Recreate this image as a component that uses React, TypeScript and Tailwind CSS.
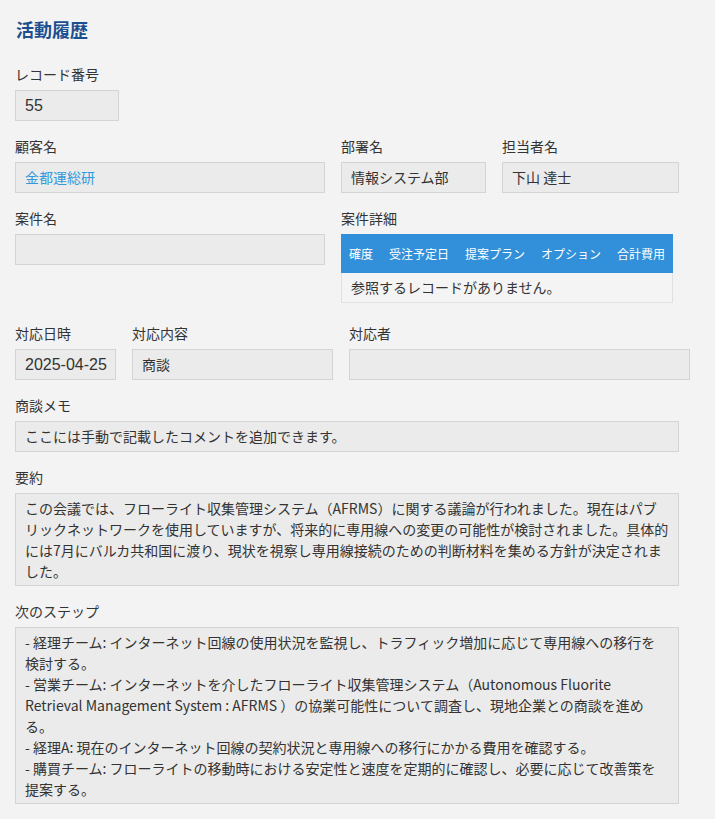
const font = "font-['Noto_Sans_CJK_JP','Noto_Sans',sans-serif]";

function Field({
  label,
  value,
  width,
  link,
  num,
}: {
  label: string;
  value?: string;
  width: string;
  link?: boolean;
  num?: boolean;
}) {
  return (
    <div className={`flex flex-col ${width}`}>
      <div className="text-[14px] leading-[20px] text-[#333] h-[20px] mb-[6px]">{label}</div>
      <div
        className={`h-[31px] border border-[#d4d4d4] bg-[#ebebeb] pl-[9px] pr-[4px] flex items-center whitespace-nowrap ${
          num ? "text-[16px] font-['Liberation_Sans',sans-serif]" : "text-[14px]"
        } ${link ? "text-[#3498db]" : "text-[#333]"}`}
      >
        {value}
      </div>
    </div>
  );
}

function TextBlock({ label, children }: { label: string; children: React.ReactNode }) {
  return (
    <div className="flex flex-col w-[664px]">
      <div className="text-[14px] leading-[20px] text-[#333] h-[20px] mb-[6px]">{label}</div>
      <div className="border border-[#d4d4d4] bg-[#ebebeb] px-[9px] py-[3.5px] text-[14px] leading-[21px] text-[#333]">
        {children}
      </div>
    </div>
  );
}

export default function App() {
  const heads = ["確度", "受注予定日", "提案プラン", "オプション", "合計費用"];
  return (
    <div className={`min-h-[819px] bg-[#f3f3f3] pl-[15px] pt-[17px] pb-[14px] ${font}`}>
      <h1 className="text-[18px] leading-[24px] font-bold text-[#1b4f8f] pl-[1px] mb-[23px]">活動履歴</h1>

      <div className="flex flex-col gap-[15px]">
        <Field label="レコード番号" value="55" width="w-[104px]" num />

        <div className="flex gap-[16px]">
          <Field label="顧客名" value="金都運総研" width="w-[310px]" link />
          <Field label="部署名" value="情報システム部" width="w-[145px]" />
          <Field label="担当者名" value="下山 達士" width="w-[177px]" />
        </div>

        <div className="flex gap-[16px] pb-[5px]">
          <Field label="案件名" width="w-[310px]" />
          <div className="flex flex-col">
            <div className="text-[14px] leading-[20px] text-[#333] h-[20px] mb-[6px]">案件詳細</div>
            <div className="w-[332px]">
              <div className="h-[39px] bg-[#3190d9] flex items-center text-white text-[12px]">
                {heads.map((h) => (
                  <span key={h} className="px-[8px]">{h}</span>
                ))}
              </div>
              <div className="h-[30px] border border-t-0 border-[#e0e0e0] bg-[#f4f4f4] flex items-center px-[9px] text-[14px] text-[#333]">
                参照するレコードがありません。
              </div>
            </div>
          </div>
        </div>

        <div className="flex gap-[16px]">
          <Field label="対応日時" value="2025-04-25" width="w-[101px]" num />
          <Field label="対応内容" value="商談" width="w-[201px]" />
          <Field label="対応者" width="w-[341px]" />
        </div>

        <Field label="商談メモ" value="ここには手動で記載したコメントを追加できます。" width="w-[664px]" />

        <TextBlock label="要約">
          この会議では、フローライト収集管理システム（AFRMS）に関する議論が行われました。現在はパブリックネットワークを使用していますが、将来的に専用線への変更の可能性が検討されました。具体的には7月にバルカ共和国に渡り、現状を視察し専用線接続のための判断材料を集める方針が決定されました。
        </TextBlock>

        <TextBlock label="次のステップ">
          <div>- 経理チーム: インターネット回線の使用状況を監視し、トラフィック増加に応じて専用線への移行を検討する。</div>
          <div>- 営業チーム: インターネットを介したフローライト収集管理システム（Autonomous Fluorite Retrieval Management System : AFRMS ）の協業可能性について調査し、現地企業との商談を進める。</div>
          <div>- 経理A: 現在のインターネット回線の契約状況と専用線への移行にかかる費用を確認する。</div>
          <div>- 購買チーム: フローライトの移動時における安定性と速度を定期的に確認し、必要に応じて改善策を提案する。</div>
        </TextBlock>
      </div>
    </div>
  );
}
